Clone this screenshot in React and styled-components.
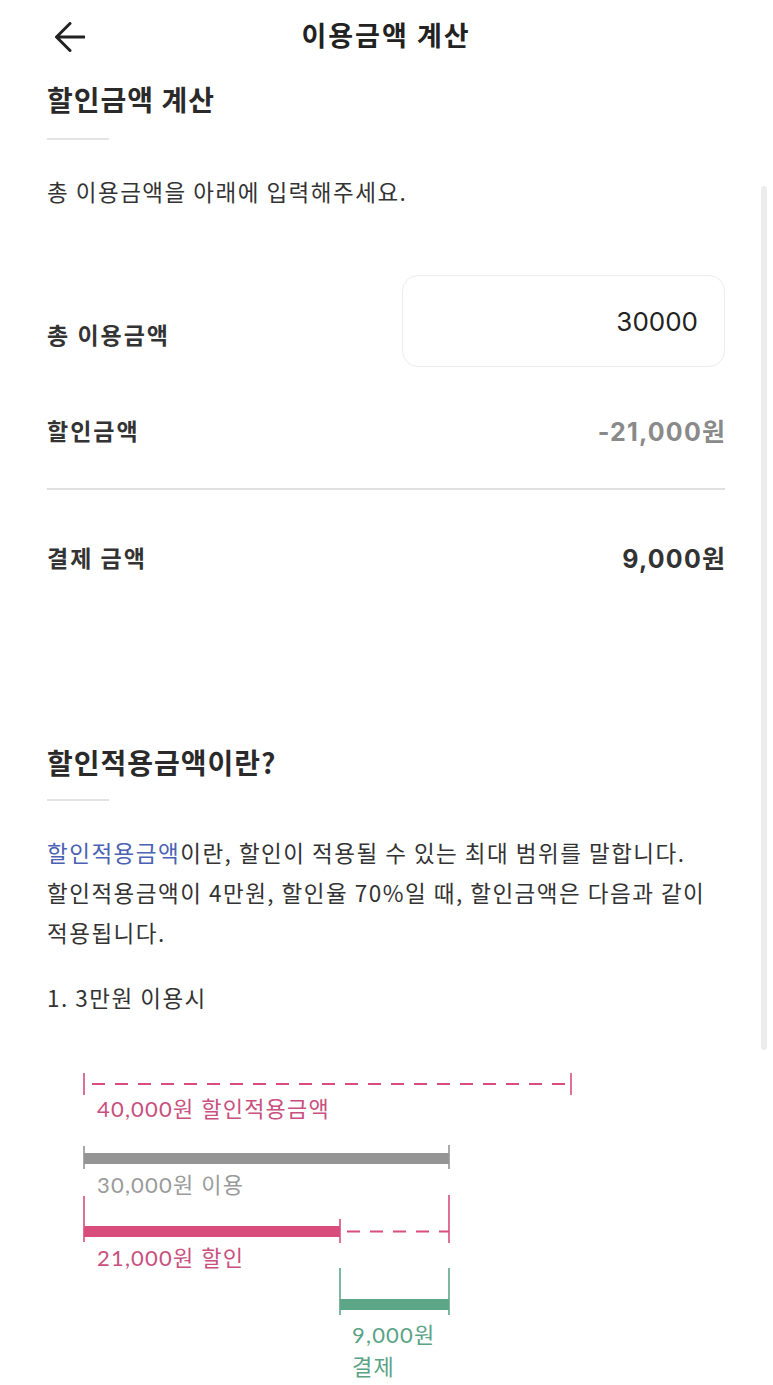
import React from "react";
import styled, { createGlobalStyle } from "styled-components";

const GlobalStyle = createGlobalStyle`
	html, body {
		margin: 0;
		background: #fff;
		overflow: hidden;
	}
	body {
		font-family: "Noto Sans CJK KR", sans-serif;
		color: #333;
	}
`;

const PINK = "#d84d7b";
const PINK_TEXT = "#c9507f";
const GRAY = "#959595";
const GRAY_TEXT = "#9a9a9a";
const GREEN = "#5da687";
const GREEN_TEXT = "#5aa386";

function BackIcon() {
	return (
		<svg width="30" height="30" viewBox="0 0 30 30" fill="none">
			<path
				d="M29 15H2.5M15 1.5L1.5 15L15 28.5"
				stroke="#222"
				strokeWidth="3"
				strokeLinecap="round"
				strokeLinejoin="round"
			/>
		</svg>
	);
}

function Tick({ x, y1, y2, color }) {
	return <line x1={x} x2={x} y1={y1} y2={y2} stroke={color} strokeWidth="1.6" />;
}

function RangeDiagram() {
	return (
		<Diagram width="678" height="325" viewBox="0 0 678 325">
			{/* 할인적용금액 */}
			<Tick x={37} y1={13} y2={35} color={PINK} />
			<Tick x={524} y1={13} y2={35} color={PINK} />
			<line x1="39" x2="522" y1="24" y2="24" stroke={PINK} strokeWidth="2" strokeDasharray="13 10" strokeDashoffset="-6" />
			<DiagramText x="50" y="57" fill={PINK_TEXT}>40,000원 할인적용금액</DiagramText>

			{/* 이용 */}
			<Tick x={37} y1={86} y2={109} color={GRAY} />
			<Tick x={402} y1={85} y2={109} color={GRAY} />
			<rect x="37" y="93" width="365" height="11" fill={GRAY} />
			<DiagramText x="50" y="133" fill={GRAY_TEXT}>30,000원 이용</DiagramText>

			{/* 할인 */}
			<Tick x={37} y1={136} y2={182} color={PINK} />
			<Tick x={293} y1={159} y2={183} color={PINK} />
			<Tick x={402} y1={135} y2={183} color={PINK} />
			<rect x="37" y="166" width="256" height="11" fill={PINK} />
			<line x1="300" x2="402" y1="171.5" y2="171.5" stroke={PINK} strokeWidth="2" strokeDasharray="13 10" />
			<DiagramText x="50" y="206" fill={PINK_TEXT}>21,000원 할인</DiagramText>

			{/* 결제 */}
			<Tick x={293} y1={208} y2={255} color={GREEN} />
			<Tick x={402} y1={208} y2={255} color={GREEN} />
			<rect x="293" y="239" width="109" height="11" fill={GREEN} />
			<DiagramText x="305" y="283" fill={GREEN_TEXT}>9,000원</DiagramText>
			<DiagramText x="305" y="315" fill={GREEN_TEXT}>결제</DiagramText>
		</Diagram>
	);
}

export default function App() {
	return (
		<>
			<GlobalStyle />
			<Screen>
				<Header>
					<BackButton aria-label="뒤로">
						<BackIcon />
					</BackButton>
					<HeaderTitle>이용금액 계산</HeaderTitle>
				</Header>

				<SectionTitle $top={12}>할인금액 계산</SectionTitle>
				<ShortRule $top={22} />
				<Intro>총 이용금액을 아래에 입력해주세요.</Intro>

				<InputRow>
					<RowLabel $top={44}>총 이용금액</RowLabel>
					<AmountInput type="text" inputMode="numeric" defaultValue="30000" />
				</InputRow>

				<SummaryRow $top={46}>
					<RowLabel>할인금액</RowLabel>
					<RowValue $muted>-21,000원</RowValue>
				</SummaryRow>
				<FullRule />
				<SummaryRow $top={50}>
					<RowLabel>결제 금액</RowLabel>
					<RowValue>9,000원</RowValue>
				</SummaryRow>

				<SectionTitle $top={171}>할인적용금액이란?</SectionTitle>
				<ShortRule $top={20} />
				<Paragraph>
					<Accent>할인적용금액</Accent>이란, 할인이 적용될 수 있는 최대 범위를 말합니다.
					<br />
					할인적용금액이 4만원, 할인율 70%일 때, 할인금액은 다음과 같이
					<br />
					적용됩니다.
				</Paragraph>
				<ExampleTitle>1. 3만원 이용시</ExampleTitle>

				<RangeDiagram />
			</Screen>
			<ScrollIndicator />
		</>
	);
}

const Screen = styled.main`
	padding: 0 48px 0 47px;
`;

const Header = styled.header`
	height: 70px;
	display: grid;
	grid-template-columns: 1fr auto 1fr;
	align-items: center;
`;

const BackButton = styled.button`
	justify-self: start;
	display: flex;
	border: 0;
	background: none;
	margin: 0 0 0 8px;
	padding: 4px 0 0;
	cursor: pointer;
`;

const HeaderTitle = styled.h1`
	margin: 0;
	font-size: 27px;
	line-height: 34px;
	font-weight: 700;
	letter-spacing: 2px;
	color: #222;
`;

const SectionTitle = styled.h2`
	margin: ${(p) => p.$top}px 0 0;
	font-size: 28px;
	line-height: 34px;
	font-weight: 700;
	letter-spacing: 1px;
	color: #2a2a2a;
`;

const ShortRule = styled.hr`
	width: 62px;
	height: 2px;
	margin: ${(p) => p.$top}px 0 0;
	border: 0;
	background: #e3e3e3;
`;

const FullRule = styled.hr`
	height: 2px;
	margin: 41px 0 0;
	border: 0;
	background: #e0e0e0;
`;

const Intro = styled.p`
	margin: 36px 0 0;
	font-size: 22.5px;
	line-height: 30px;
	letter-spacing: 1.5px;
	color: #333;
`;

const InputRow = styled.div`
	display: flex;
	justify-content: space-between;
	align-items: flex-start;
	margin-top: 69px;
`;

const RowLabel = styled.span`
	margin-top: ${(p) => p.$top || 0}px;
	font-size: 23px;
	line-height: 30px;
	font-weight: 700;
	letter-spacing: 2px;
	color: #333;
`;

const AmountInput = styled.input`
	box-sizing: border-box;
	width: 323px;
	height: 92px;
	padding: 0 26px;
	border: 1px solid #ececec;
	border-radius: 16px;
	outline: none;
	background: #fff;
	text-align: right;
	font-family: Inter, "Noto Sans CJK KR", sans-serif;
	font-size: 26px;
	color: #222;
`;

const SummaryRow = styled.div`
	display: flex;
	justify-content: space-between;
	align-items: center;
	height: 34px;
	margin-top: ${(p) => p.$top}px;
`;

const RowValue = styled.span`
	margin-right: -1.2px;
	font-family: Inter, "Noto Sans CJK KR", sans-serif;
	font-size: 25px;
	font-weight: 700;
	letter-spacing: 1.2px;
	color: ${(p) => (p.$muted ? "#8a8a8a" : "#333")};
`;

const Paragraph = styled.p`
	margin: 31px 0 0;
	font-size: 22.5px;
	line-height: 40px;
	letter-spacing: 1.5px;
	color: #333;
	white-space: nowrap;
`;

const Accent = styled.span`
	color: #4a62b3;
`;

const ExampleTitle = styled.p`
	margin: 25px 0 0;
	font-size: 22.5px;
	line-height: 40px;
	letter-spacing: 1.5px;
	color: #333;
`;

const Diagram = styled.svg`
	display: block;
	margin-top: 43px;
`;

const DiagramText = styled.text`
	font-family: Lato, "Noto Sans CJK KR", sans-serif;
	font-size: 22px;
	letter-spacing: 1.2px;
`;

const ScrollIndicator = styled.div`
	position: fixed;
	top: 186px;
	right: 6px;
	width: 6px;
	height: 864px;
	border-radius: 3px;
	background: #ececec;
`;
